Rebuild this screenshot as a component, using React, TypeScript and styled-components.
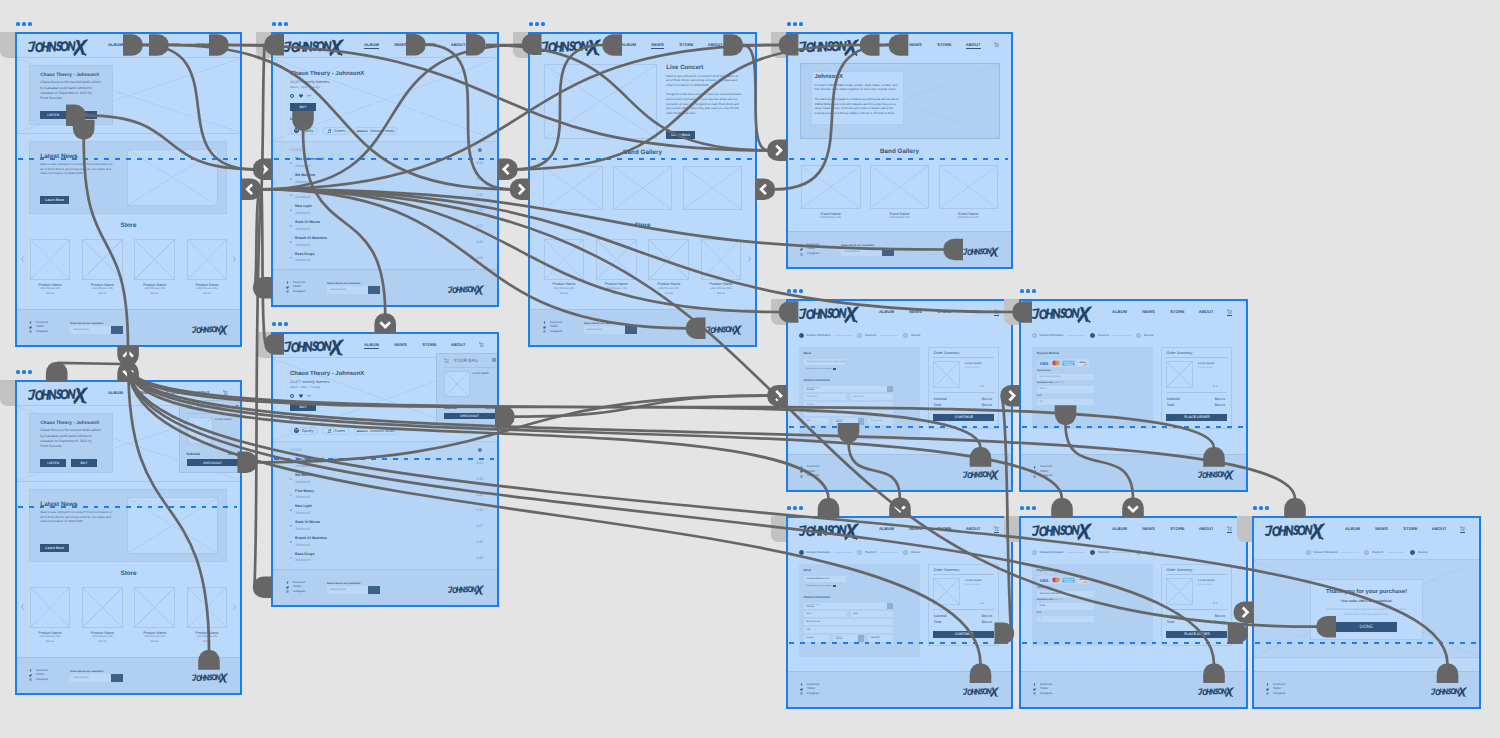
import { ReactNode } from "react";
import styled, { createGlobalStyle, css } from "styled-components";
import {
  FaClock,
  FaFacebookF,
  FaHeart,
  FaInstagram,
  FaItunesNote,
  FaSpotify,
  FaTimesCircle,
  FaTwitter,
} from "react-icons/fa";
import { ShoppingCart } from "lucide-react";

const ink = "#33567a";
const soft = "#7292b5";
const rule = "#a6c4e6";
const panel = "#b1cff0";
const paper = "#bbd9fa";
const blue = "#1a7ef0";
const wire = "#666666";

type Point = [number, number];
type Side = "left" | "right" | "up" | "down";

/* ---------- boards ---------- */

export default function App() {
  return (
    <>
      <GlobalStyle />
      <Canvas>
        <Board x={15} y={32} w={227} h={315}>
          <HomePage />
        </Board>
        <Board x={15} y={380} w={227} h={315}>
          <HomePage bag />
        </Board>
        <Board x={271} y={32} w={228} h={275}>
          <AlbumPage />
        </Board>
        <Board x={271} y={332} w={228} h={275}>
          <AlbumPage bag />
        </Board>
        <Board x={528} y={32} w={229} h={315}>
          <NewsPage />
        </Board>
        <Board x={786} y={32} w={227} h={237}>
          <AboutPage />
        </Board>
        <Board x={786} y={299} w={227} h={192.5} dashTop={127}>
          <ContactPage />
        </Board>
        <Board x={1019} y={299} w={229} h={192.5} dashTop={127}>
          <PaymentPage />
        </Board>
        <Board x={786} y={516} w={227} h={193}>
          <ContactPage filled />
        </Board>
        <Board x={1019} y={516} w={229} h={193}>
          <PaymentPage filled />
        </Board>
        <Board x={1252} y={516} w={229} h={193}>
          <DonePage />
        </Board>
        <Wires />
      </Canvas>
    </>
  );
}

interface BoardProps {
  x: number;
  y: number;
  w: number;
  h: number;
  dashTop?: number;
  children: ReactNode;
}

function Board({ x, y, w, h, dashTop = 126, children }: BoardProps) {
  return (
    <>
      <BoardFrame $x={x} $y={y} $w={w} $h={h}>
        {children}
        <FoldLine $top={dashTop} />
        <BoardOutline />
      </BoardFrame>
      <BoardHandle $x={x - 15.5} $y={y} />
      <BoardDots $x={x + 1.4} $y={y - 9.6}>
        <i />
        <i />
        <i />
      </BoardDots>
    </>
  );
}

/* ---------- shared page parts ---------- */

function Logo({ small }: { small?: boolean }) {
  return (
    <LogoSvg viewBox="0 0 60 17" $small={small}>
      <g
        fontFamily="Lato, 'Liberation Sans', sans-serif"
        fontWeight="900"
        fontStyle="italic"
        fill="#1f4266"
        stroke="#1f4266"
        strokeWidth=".45"
      >
        <text
          x="1.6 8.2 15.4 23.8 32.2 37.6 45.6"
          y="12.4 12.6 12 12.5 11.6 12 11.6"
          rotate="10 0 4 -2 5 0 3"
          fontSize="13"
          transform="scale(.86 1)"
        >
          JOHNSON
        </text>
        <text x="0" y="0" fontSize="19.5" transform="translate(46 15) rotate(4) scale(.9 1)">
          X
        </text>
      </g>
      <path
        d="M.6 4.1 7.6 3M0 11.2l2.6 1.2M57 2.2l2.6-1.6M47.6 14.8l-1.4 2M56.4 14.6l1.8 1.8"
        fill="none"
        stroke="#1f4266"
        strokeWidth="1.5"
      />
    </LogoSvg>
  );
}

const links = ["ALBUM", "NEWS", "STORE", "ABOUT"];

function SiteHeader({ active, lined }: { active?: string; lined?: boolean }) {
  return (
    <Header $lined={lined}>
      <Logo />
      <Nav>
        {links.map((link) => (
          <NavLink key={link} $active={link === active}>
            {link}
          </NavLink>
        ))}
        <NavLink $active={active === "CART"}>
          <ShoppingCart size={4.8} strokeWidth={1.8} />
        </NavLink>
      </Nav>
    </Header>
  );
}

function SiteFooter({ newsletter = true, inset = 14 }: { newsletter?: boolean; inset?: number }) {
  return (
    <Footer $inset={inset}>
      <Socials>
        <li>
          <FaFacebookF /> Facebook
        </li>
        <li>
          <FaTwitter /> Twitter
        </li>
        <li>
          <FaInstagram /> Instagram
        </li>
      </Socials>
      {newsletter && (
        <Newsletter>
          <strong>Subscribe to our newsletter</strong>
          <div>
            <span>Email Address</span>
            <b>→</b>
          </div>
        </Newsletter>
      )}
      <Logo small />
    </Footer>
  );
}

function Products() {
  return (
    <>
      <SectionTitle $height={23}>Store</SectionTitle>
      <ProductRow>
        <Arrow viewBox="0 0 3 6">
          <path d="M2.5 .5 .6 3l1.9 2.5" />
        </Arrow>
        <ProductGrid>
          {[0, 1, 2, 3].map((n) => (
            <Item key={n}>
              <Crossed $w={40.5} $h={41} />
              <b>Product Name</b>
              <span>click Choose info</span>
              <em>$xx.xx</em>
            </Item>
          ))}
        </ProductGrid>
        <Arrow viewBox="0 0 3 6">
          <path d="M.5 .5 2.4 3 .5 5.5" />
        </Arrow>
      </ProductRow>
    </>
  );
}

function Bag({ top }: { top: number }) {
  return (
    <BagPanel $top={top}>
      <BagTitle>
        <ShoppingCart size={5} strokeWidth={1.6} />
        <span>YOUR BAG</span>
        <FaTimesCircle size={4} />
      </BagTitle>
      <BagItem>
        <Crossed $w={26.5} $h={26.5} />
        <span>Lorem ipsum</span>
      </BagItem>
      <BagTotal>
        <span>Subtotal</span>
        <span>$xx.xx</span>
      </BagTotal>
      <Button $w={52} $h={6.5} $size={3.4}>
        CHECKOUT
      </Button>
    </BagPanel>
  );
}

function Lines({ lines, leading, size = 3 }: { lines: string[]; leading: number; size?: number }) {
  return (
    <Paragraph $leading={leading} $size={size}>
      {lines.map((line, i) => (
        <p key={i}>{line}</p>
      ))}
    </Paragraph>
  );
}

/* ---------- pages ---------- */

function HomePage({ bag }: { bag?: boolean }) {
  return (
    <Page>
      <SiteHeader lined />
      <Hero $h={76}>
        <HeroCard>
          <Heading $size={4.75}>Chaos Theory - JohnsonX</Heading>
          <Lines
            leading={5.4}
            size={3.35}
            lines={[
              "Chaos theory is the second studio album",
              "by Canadian punk band JohnsonX,",
              "released on September 6, 2022 by",
              "Punk Records.",
            ]}
          />
          <ButtonRow>
            <Button $w={26} $h={8} $size={3.4}>
              LISTEN
            </Button>
            <Button $w={26} $h={8} $size={3.4}>
              BUY
            </Button>
          </ButtonRow>
        </HeroCard>
      </Hero>
      <NewsCard>
        <div>
          <Heading $size={6.4}>Latest News</Heading>
          <Lines
            leading={4.7}
            lines={[
              "Want to see JohnsonX in concert? Find information on",
              "all of Punk Rock's upcoming concerts, tour dates and",
              "ticket information for 2022-2023.",
            ]}
          />
          <Button $w={29} $h={8} $size={3.5}>
            Learn More
          </Button>
        </div>
        <Crossed $w={91} $h={57} />
      </NewsCard>
      <Products />
      <SiteFooter />
      {bag && <Bag top={19.5} />}
    </Page>
  );
}

const tracks = [
  ["This Is JohnsonX", "4:08"],
  ["We Machine", "3:29"],
  ["Fine Misery", "4:28"],
  ["New Light", "5:34"],
  ["State Of Moves", "4:37"],
  ["Breath Of Madness", "5:45"],
  ["Bass Drugs", "4:38"],
];

function AlbumPage({ bag }: { bag?: boolean }) {
  return (
    <Page>
      <SiteHeader active="ALBUM" lined />
      <Hero $h={84}>
        <AlbumInfo>
          <Heading $size={6}>Chaos Theory - JohnsonX</Heading>
          <strong>21,377 monthly listeners</strong>
          <small>Album - 2022 - 7 songs</small>
          <AlbumIcons>
            <FaTimesCircle size={4} />
            <FaHeart size={4} />
            <span>•••</span>
          </AlbumIcons>
          <Button $w={26} $h={8} $size={3.4}>
            BUY
          </Button>
          <ListenOn>Listen On</ListenOn>
          <Pills>
            <Pill $w={27.5}>
              <FaSpotify size={5} /> Spotify
            </Pill>
            <Pill $w={27.5}>
              <FaItunesNote size={4.5} /> iTunes
            </Pill>
            <Pill $w={43.5}>
              <b>amazon</b> Amazon music
            </Pill>
          </Pills>
        </AlbumInfo>
      </Hero>
      <TrackList>
        <TrackHead>
          <span># TITLE</span>
          <FaClock size={4} />
        </TrackHead>
        {tracks.map(([title, time], i) => (
          <Track key={title}>
            <span>{i + 1}</span>
            <div>
              <b>{title}</b>
              <em>JohnsonX</em>
            </div>
            <time>{time}</time>
          </Track>
        ))}
      </TrackList>
      <SiteFooter inset={15} />
      {bag && <Bag top={21} />}
    </Page>
  );
}

function NewsPage() {
  return (
    <Page>
      <SiteHeader active="NEWS" />
      <ConcertRow>
        <Crossed $w={113} $h={75} />
        <div>
          <Heading $size={6.1}>Live Concert</Heading>
          <Lines
            leading={4.65}
            lines={[
              "Want to see JohnsonX in concert? Find information on",
              "all of Punk Rock's upcoming concerts, tour dates and",
              "ticket information for 2022-2023.",
              "",
              "Songkick is the first to know of new tour announcements",
              "and concert information. If your favorite artists are not",
              "currently on tour, join Songkick to track Punk Rock and",
              "get concert alerts when they play near you, like 37,060",
              "other Punk Rock fans.",
            ]}
          />
          <Button $w={29} $h={8} $size={3.5}>
            Learn More
          </Button>
        </div>
      </ConcertRow>
      <SectionTitle $height={27}>Band Gallery</SectionTitle>
      <GalleryRow $h={48}>
        <Crossed $w={59.5} $h={44} />
        <Crossed $w={59.5} $h={44} />
        <Crossed $w={59.5} $h={44} />
      </GalleryRow>
      <Products />
      <SiteFooter inset={15} />
    </Page>
  );
}

function AboutPage() {
  return (
    <Page>
      <SiteHeader active="ABOUT" />
      <AboutHero>
        <AboutCard>
          <Heading $size={5.9}>JohnsonX</Heading>
          <Lines
            leading={4.75}
            size={2.97}
            lines={[
              "Formed in 2005, Matt (vocals, guitar), Ryan (bass, vocals), and",
              "Fitz (drums), were drawn together for their love of great music.",
              "",
              "The band quickly began to combine everything we all love about",
              "1990s/2000s punk rock with classics and hit songs like you've",
              "never heard before. From the epic notes of Meat Loaf to the",
              "soaring power of a Disney ballad, nothing is off limits to them.",
            ]}
          />
        </AboutCard>
      </AboutHero>
      <SectionTitle $height={26}>Band Gallery</SectionTitle>
      <GalleryRow $h={66.5}>
        {[0, 1, 2].map((n) => (
          <Item key={n}>
            <Crossed $w={59.5} $h={44} />
            <b>Event Name</b>
            <span>click Choose info</span>
          </Item>
        ))}
      </GalleryRow>
      <SiteFooter />
    </Page>
  );
}

function Stepper({ step, centered }: { step: number; centered?: boolean }) {
  return (
    <Steps $centered={centered}>
      {["Contact Information", "Payment", "Review"].map((label, i) => (
        <Step key={label} $on={i === step} $wide={i === 0}>
          <i />
          <span>{label}</span>
          {i < 2 && <u />}
        </Step>
      ))}
    </Steps>
  );
}

function OrderSummary({ action }: { action: string }) {
  return (
    <Summary>
      <h4>Order Summary</h4>
      <SummaryItem>
        <Crossed $w={27} $h={27} />
        <div>
          <b>Lorem ipsum</b>
          <span>Lorem ipsum</span>
          <em>- 1 +</em>
        </div>
      </SummaryItem>
      <SummaryLine>
        <span>Subtotal</span>
        <span>$xx.xx</span>
      </SummaryLine>
      <SummaryLine>
        <span>Total</span>
        <span>$xx.xx</span>
      </SummaryLine>
      <Button $w={61} $h={6.5} $size={3.5}>
        {action}
      </Button>
    </Summary>
  );
}

function ContactPage({ filled }: { filled?: boolean }) {
  const text = (empty: string, full: string) => (filled ? full : empty);
  return (
    <Page>
      <SiteHeader active="CART" />
      <Stepper step={0} />
      <CheckoutRow>
        <FormPanel $h={92.5}>
          <Label>Email</Label>
          <Field $w={42.5} $dark={filled}>
            {text("Type Email to receive your digital receipt", "shoppee68@gmail.com")}
          </Field>
          <Hint>
            Subscribe to our newsletter <i />
          </Hint>
          <Label>Contact Information</Label>
          <Field $w={89.5} $dark $select>
            <small>Country/Region</small>
            Canada
          </Field>
          <FieldRow>
            <Field $w={42.5} $dark={filled}>{text("First name", "John")}</Field>
            <Field $w={42.5} $dark={filled}>{text("Last name", "Doe")}</Field>
          </FieldRow>
          <Field $w={89.5} $dark={filled}>{text("Address", "99 Infinite Ave")}</Field>
          <Field $w={89.5} $dark={filled}>{text("Apartment", "#23")}</Field>
          <FieldRow>
            <Field $w={25} $dark={filled}>{text("City", "London")}</Field>
            <Field $w={31} $dark $select>
              <small>Province</small>
              Ontario
            </Field>
            <Field $w={25} $dark={filled}>{text("Postal code", "N6A 5P2")}</Field>
          </FieldRow>
        </FormPanel>
        <OrderSummary action="CONTINUE" />
      </CheckoutRow>
      <SiteFooter newsletter={false} />
    </Page>
  );
}

function PaymentPage({ filled }: { filled?: boolean }) {
  return (
    <Page>
      <SiteHeader active="CART" />
      <Stepper step={1} />
      <CheckoutRow>
        <FormPanel $h={81.5}>
          <Label>Payment Method</Label>
          <Cards viewBox="0 0 52 8">
            <rect x="0" y="0" width="52" height="8" fill="#b9d6f6" />
            <text x="2.6" y="5.6" textLength="9" fill="#1760b8" fontSize="4.2" fontStyle="italic">
              VISA
            </text>
            <circle cx="17.6" cy="4" r="2.4" fill="#d7453f" />
            <circle cx="20.4" cy="4" r="2.4" fill="#e08d3c" fillOpacity=".9" />
            <rect x="25.5" y="1.8" width="12" height="4.6" fill="#4ba5dd" />
            <text x="26" y="3.9" textLength="11" fill="#e4f1fd" fontSize="2.1">
              AMERICAN
            </text>
            <text x="27" y="6" textLength="9" fill="#e4f1fd" fontSize="2.1">
              EXPRESS
            </text>
            <rect x="41.5" y="1.7" width="8" height="4.8" fill="#cfe1f2" />
            <text x="42" y="4" textLength="7" fill="#4c6480" fontSize="2">
              DISCOVER
            </text>
            <path d="M44 6.5q4-.4 5.5-2v2z" fill="#e39055" />
          </Cards>
          <FieldLabel>Card number</FieldLabel>
          <Field $w={57} $dark={filled}>{filled ? "4519 0000 1234 5678" : "0000 0000 0000 0000"}</Field>
          <FieldLabel>
            Expiration date <em>(MM/YY)</em>
          </FieldLabel>
          <Field $w={57} $dark={filled}>{filled ? "12/26" : "MM/YY"}</Field>
          <FieldLabel>CVV</FieldLabel>
          <Field $w={57} $dark={filled}>{filled ? "**" : "000"}</Field>
        </FormPanel>
        <OrderSummary action="PLACE ORDER" />
      </CheckoutRow>
      <SiteFooter newsletter={false} />
    </Page>
  );
}

function DonePage() {
  return (
    <Page>
      <SiteHeader active="CART" />
      <Stepper step={2} centered />
      <ThanksHero>
        <ThanksCard>
          <Heading $size={5.75}>Thank you for your purchase!</Heading>
          <strong>Your order #8975 was submitted.</strong>
          <small>You will receive an e-mail receipt from our customer service team.</small>
          <small>Please also check your spam email.</small>
          <Button $w={61} $h={9.5} $size={4.8}>
            DONE
          </Button>
        </ThanksCard>
      </ThanksHero>
      <SiteFooter newsletter={false} />
    </Page>
  );
}

/* ---------- prototype wires ---------- */

// s-curve leaving and entering along the x axis
function across([x1, y1]: Point, [x2, y2]: Point) {
  const dx = x2 - x1;
  const length = Math.hypot(dx, y2 - y1);
  const d = Math.min(length * (length > 400 ? 0.54 : 0.58), Math.abs(dx));
  return `M${x1} ${y1}C${x1 + d} ${y1} ${x2 - d} ${y2} ${x2} ${y2}`;
}

// s-curve leaving and entering along the y axis, flatter on long spans
function downward([x1, y1]: Point, [x2, y2]: Point) {
  const dy = y2 - y1;
  const d = Math.min(Math.hypot(x2 - x1, dy) * 0.6, dy, 45 + dy * 0.44);
  return `M${x1} ${y1}C${x1} ${y1 + d} ${x2} ${y2 - d} ${x2} ${y2}`;
}

const albumHub: Point = [260, 189.3];
const homeHub: Point = [128.3, 366];

const paths = [
  across([142, 45], [254, 169.3]),
  across([168, 45], [511, 189.3]),
  across([228, 45], [768, 150.3]),
  across([85, 115.3], [254, 169.3]),
  across([425, 44.7], [511, 189.3]),
  across([486, 45], [768, 150.3]),
  across([517, 169.3], [603, 45]),
  across([517, 169.3], [861, 45]),
  across([743, 45], [768, 150.3]),
  across([775, 189.3], [889, 45]),
  across([257, 462.3], [768, 395.7]),
  across([514, 416.7], [768, 395.7]),
  ...(
    [
      [522, 45],
      [779, 45],
      [944, 249.5],
      [1013, 312],
      [779, 312],
      [687, 328.3],
      [1317, 626.7],
    ] as Point[]
  ).map((end) => across(albumHub, end)),
  ...(
    [
      [209, 651],
      [980.5, 448],
      [1214, 448],
      [828.5, 499],
      [1062, 499],
      [1295, 499],
      [980.5, 664],
      [1214, 664],
      [1447.5, 664],
    ] as Point[]
  ).map((end) => downward(homeHub, end)),
  downward([83.7, 139], [128, 348]),
  downward([303, 130], [385.2, 314]),
  downward([848.5, 442], [900, 499]),
  downward([1065.5, 424], [1133, 499]),
  "M57 362.8 122 364",
  "M142 45H266M486 45H523M743 45H780M878 45H890",
  "M264.5 45C262.5 80 263.5 150 261.5 189.3",
  "M261.5 189.3C263.5 240 261 330 265.5 344",
  "M259 189.3C255 215 257.5 260 255 288",
  "M261 189.3C254 320 258.5 480 254.5 587",
  "M1002 396C1009 440 1006 560 1011 630",
];

const plugs: [Side, number, number][] = [
  ["right", 123, 45], ["right", 149, 45], ["right", 209, 45], ["right", 66, 115.3],
  ["down", 83.7, 119.8], ["left", 284, 44.7], ["right", 406, 44.7], ["right", 466, 44.7],
  ["down", 303, 111], ["left", 272.5, 287.7], ["left", 284, 344], ["left", 272.5, 587.3],
  ["right", 495, 416.7], ["right", 237.5, 462.3], ["left", 541.5, 44.3], ["left", 622, 45],
  ["right", 723.3, 45], ["left", 705.5, 328.3], ["left", 798.4, 44.7], ["left", 879.5, 45],
  ["left", 908.3, 45], ["left", 963, 249.5], ["left", 798.4, 312], ["left", 1032, 312],
  ["down", 848.5, 423], ["down", 1065.5, 405.3], ["up", 980.5, 466.7], ["up", 1214, 466.7],
  ["up", 828.5, 517.7], ["up", 1062, 517.7], ["up", 1295, 517.7], ["up", 980.5, 683],
  ["up", 1214, 683], ["up", 1447.5, 683], ["right", 994.5, 633.3], ["right", 1227.7, 633.3],
  ["left", 1336, 626.7], ["up", 209, 669.7], ["up", 56.7, 381.7],
];

// same plugs, with the chevron of an incoming connection
const entries: [Side, number, number, number][] = [
  ["left", 272.5, 169.3, 0], ["right", 241.5, 189.3, 180], ["up", 385.2, 332.8, 90],
  ["right", 498, 169.3, 180], ["left", 529.5, 189.3, 0], ["right", 755.3, 189.3, 180],
  ["left", 786.8, 150.3, 0], ["left", 786.8, 395.7, 0], ["left", 1020, 395.7, 0],
  ["up", 900, 517, 90], ["up", 1133, 517, 90], ["left", 1253.3, 612.3, 0],
  ["down", 128.1, 346, -90], ["up", 128.1, 381.5, 90],
];

const turns: Record<Side, number> = { right: 0, down: 90, left: 180, up: 270 };

function Plug({ side, x, y }: { side: Side; x: number; y: number }) {
  return (
    <path
      d="M0-10.8H8.8A10.8 10.2 0 0 1 19.6-.6V.6A10.8 10.2 0 0 1 8.8 10.8H0Z"
      transform={`translate(${x} ${y}) rotate(${turns[side]})`}
      fill={wire}
    />
  );
}

function Chevron({ side, x, y, turn }: { side: Side; x: number; y: number; turn: number }) {
  const reach = 8.4;
  const cx = x + (side === "right" ? reach : side === "left" ? -reach : 0);
  const cy = y + (side === "down" ? reach : side === "up" ? -reach : 0);
  return <path d="M-2.2-4.8 2.6 0-2.2 4.8" transform={`translate(${cx} ${cy}) rotate(${turn})`} stroke="#fff" />;
}

function Wires() {
  return (
    <WireLayer viewBox="0 0 1500 738">
      {plugs.map(([side, x, y]) => (
        <Plug key={`${x}-${y}`} side={side} x={x} y={y} />
      ))}
      {entries.map(([side, x, y, turn]) => (
        <g key={`${x}-${y}`}>
          <Plug side={side} x={x} y={y} />
          <Chevron side={side} x={x} y={y} turn={turn} />
        </g>
      ))}
      {paths.map((d) => (
        <path key={d} d={d} stroke={wire} />
      ))}
      <path d="M128.1 346V368" stroke={wire} />
    </WireLayer>
  );
}

/* ---------- styles ---------- */

const GlobalStyle = createGlobalStyle`
  * {
    box-sizing: border-box;
    margin: 0;
    padding: 0;
  }

  body {
    background: #e4e4e4;
    font-family: "Liberation Sans", Arial, sans-serif;
    text-rendering: geometricPrecision;
    overflow: hidden;
  }

  i, em {
    font-style: normal;
  }
`;

const crossed = css`
  background-image:
    linear-gradient(to top right, transparent calc(50% - 0.5px), ${rule} 50%, transparent calc(50% + 0.5px)),
    linear-gradient(to bottom right, transparent calc(50% - 0.5px), ${rule} 50%, transparent calc(50% + 0.5px));
`;

const Canvas = styled.main`
  position: relative;
  width: 1500px;
  height: 738px;
  overflow: hidden;
`;

const BoardFrame = styled.section<{ $x: number; $y: number; $w: number; $h: number }>`
  position: absolute;
  left: ${({ $x }) => $x}px;
  top: ${({ $y }) => $y}px;
  width: ${({ $w }) => $w}px;
  height: ${({ $h }) => $h}px;
  background: ${paper};
  color: ${ink};
  white-space: nowrap;
`;

const BoardOutline = styled.div`
  position: absolute;
  inset: -0.4px;
  border: 2px solid ${blue};
`;

const FoldLine = styled.div<{ $top: number }>`
  position: absolute;
  top: ${({ $top }) => $top}px;
  left: 3px;
  right: 5px;
  height: 2px;
  background: repeating-linear-gradient(90deg, ${blue} 0 4.7px, transparent 4.7px 10.8px);
`;

const BoardHandle = styled.div<{ $x: number; $y: number }>`
  position: absolute;
  left: ${({ $x }) => $x}px;
  top: ${({ $y }) => $y}px;
  width: 15.5px;
  height: 26px;
  border-bottom-left-radius: 7px;
  background: #c2c2c2;
`;

const BoardDots = styled.div<{ $x: number; $y: number }>`
  position: absolute;
  left: ${({ $x }) => $x}px;
  top: ${({ $y }) => $y}px;
  display: flex;
  gap: 2.3px;

  i {
    width: 3.7px;
    height: 3.7px;
    border-radius: 50%;
    background: ${blue};
  }
`;

const Page = styled.div`
  position: relative;
  display: flex;
  flex-direction: column;
  width: 100%;
  height: 100%;
`;

const LogoSvg = styled.svg<{ $small?: boolean }>`
  width: ${({ $small }) => ($small ? 36 : 60)}px;
  height: ${({ $small }) => ($small ? 10.2 : 17)}px;
  overflow: visible;
  flex: none;
`;

const Header = styled.header<{ $lined?: boolean }>`
  display: flex;
  height: 26px;
  padding: 0 0 0 12.5px;
  flex: none;
  border-bottom: 1px solid ${({ $lined }) => ($lined ? "#aac8ea" : "transparent")};

  ${LogoSvg} {
    margin-top: 6.6px;
  }
`;

const Nav = styled.nav`
  display: grid;
  grid-template-columns: repeat(4, 28.9px) 18px;
  margin-left: 13.6px;
  height: 26px;
  align-items: center;
  justify-items: center;
`;

const NavLink = styled.a<{ $active?: boolean }>`
  display: flex;
  align-items: center;
  height: 8px;
  border-bottom: 1px solid ${({ $active }) => ($active ? ink : "transparent")};
  font-size: 4.2px;
  font-weight: 700;
`;

const Hero = styled.div<{ $h: number }>`
  height: ${({ $h }) => $h}px;
  flex: none;
  border-bottom: 1px solid #a8c6e8;
  ${crossed}
`;

const Crossed = styled.div<{ $w: number; $h: number }>`
  width: ${({ $w }) => $w}px;
  height: ${({ $h }) => $h}px;
  flex: none;
  border: 1px solid #a9c7e8;
  background-color: ${paper};
  ${crossed}
`;

const Heading = styled.h2<{ $size: number }>`
  font-size: ${({ $size }) => $size}px;
  line-height: 8px;
  font-weight: 700;
`;

const Paragraph = styled.div<{ $leading: number; $size: number }>`
  font-size: ${({ $size }) => $size}px;
  line-height: ${({ $leading }) => $leading}px;
  color: #416388;

  p {
    height: ${({ $leading }) => $leading}px;
  }
`;

const Button = styled.div<{ $w: number; $h: number; $size: number }>`
  display: flex;
  align-items: center;
  justify-content: center;
  flex: none;
  width: ${({ $w }) => $w}px;
  height: ${({ $h }) => $h}px;
  background: #32557b;
  color: #c3def9;
  font-size: ${({ $size }) => $size}px;
  font-weight: 700;
`;

const ButtonRow = styled.div`
  display: flex;
  gap: 4.7px;
  margin-top: 9.2px;
`;

const HeroCard = styled.div`
  width: 83.5px;
  height: 60px;
  margin: 7.3px 0 0 14.3px;
  padding: 5.6px 0 0 10px;
  border: 1px solid #a9c7e8;
  background: ${panel};

  ${Heading} {
    margin-bottom: 0.4px;
  }
`;

const NewsCard = styled.div`
  display: flex;
  flex: none;
  justify-content: space-between;
  width: 197.5px;
  height: 72.7px;
  margin: 7.2px 0 0 14.3px;
  padding: 7px 8px 0 10px;
  border: 1px solid #a9c7e8;
  background: ${panel};

  ${Heading} {
    margin: 4.1px 0 0.8px;
  }

  ${Button} {
    margin-top: 19.7px;
  }
`;

const SectionTitle = styled.h3<{ $height: number }>`
  display: flex;
  flex: none;
  align-items: center;
  justify-content: center;
  height: ${({ $height }) => $height}px;
  font-size: 6.3px;
`;

const ProductRow = styled.div`
  display: flex;
  flex: none;
  padding: 2px 6px 0;
  justify-content: space-between;
`;

const Arrow = styled.svg`
  width: 3px;
  height: 6px;
  margin-top: 17px;
  fill: none;
  stroke: ${soft};
  stroke-width: 0.6;
`;

const ProductGrid = styled.div`
  display: flex;
  width: 197.5px;
  justify-content: space-between;
`;

const Item = styled.div`
  display: flex;
  flex-direction: column;
  align-items: center;
  line-height: 4.7px;

  b {
    margin-top: 2.8px;
    font-size: 3.6px;
    font-weight: 400;
  }

  span,
  em {
    font-size: 2.75px;
    color: #587a9f;
  }
`;

const Footer = styled.footer<{ $inset: number }>`
  display: flex;
  flex: none;
  width: 100%;
  height: 38px;
  margin-top: auto;
  padding: 10.5px ${({ $inset }) => $inset}px 0;
  border-top: 1px solid #a4c1e1;
  background: ${panel};

  > ${LogoSvg} {
    margin: 4.5px 0 0 auto;
  }
`;

const Socials = styled.ul`
  width: 41px;
  list-style: none;
  font-size: 2.75px;
  line-height: 4.6px;

  li {
    display: flex;
    align-items: center;
    gap: 4px;
    height: 4.6px;
  }

  svg {
    width: 3px;
    height: 3px;
    flex: none;
  }
`;

const Newsletter = styled.div`
  strong {
    display: block;
    font-size: 2.55px;
    line-height: 5px;
    font-weight: 600;
  }

  div {
    display: flex;
    width: 53px;
    height: 8px;
    line-height: 8px;
    background: #bbd8f7;
    font-size: 2.4px;
    color: ${soft};
  }

  span {
    flex: 1;
    padding-left: 3.5px;
  }

  b {
    width: 12px;
    background: #3d6187;
    color: #b9d5f4;
    font-size: 3px;
    text-align: center;
  }
`;

// slides over the right side of the page below the header
const BagPanel = styled.aside<{ $top: number }>`
  position: absolute;
  top: ${({ $top }) => $top}px;
  right: 0;
  width: 63px;
  height: 73.5px;
  padding: 0 0 0 6.5px;
  border: 1px solid #a2c0e2;
  background: ${panel};
`;

const BagTitle = styled.div`
  display: flex;
  align-items: center;
  gap: 5px;
  width: 52px;
  height: 13.5px;
  border-bottom: 1px solid #a4c1e1;
  font-size: 4.7px;
  color: #4d6f94;

  svg:last-child {
    margin-left: auto;
  }
`;

const BagItem = styled.div`
  display: flex;
  gap: 2px;
  margin-top: 3.3px;
  font-size: 2.9px;
  line-height: 5px;
`;

const BagTotal = styled.div`
  display: flex;
  justify-content: space-between;
  width: 52px;
  margin-top: 8.5px;
  font-size: 3.4px;
  line-height: 5px;
  font-weight: 600;
  margin-bottom: 2px;
`;

const AlbumInfo = styled.div`
  display: flex;
  flex-direction: column;
  padding: 11.6px 0 0 19px;

  strong {
    margin-top: 1.2px;
    font-size: 3.65px;
    line-height: 6px;
    font-weight: 500;
  }

  small {
    font-size: 2.9px;
    line-height: 4.5px;
    color: #587a9f;
  }
`;

const AlbumIcons = styled.div`
  display: flex;
  align-items: center;
  gap: 4.5px;
  height: 8px;
  margin: 2.5px 0 3.4px;
  font-size: 3.5px;
`;

const ListenOn = styled.h4`
  margin-top: 4px;
  font-size: 4.4px;
  line-height: 7px;
`;

const Pills = styled.div`
  display: flex;
  gap: 4.5px;
  margin-top: 5px;
`;

const Pill = styled.div<{ $w: number }>`
  display: flex;
  align-items: center;
  justify-content: center;
  gap: 2.5px;
  width: ${({ $w }) => $w}px;
  height: 7.5px;
  border: 1px solid #adcbed;
  border-radius: 4px;
  font-size: 3.8px;

  b {
    font-size: 2.9px;
    color: #1f4266;
  }

  svg {
    color: #1f4266;
  }
`;

const TrackList = styled.div`
  flex: 1;
  padding: 3.8px 16px 0 19px;
  background: #b6d4f5;
`;

const TrackHead = styled.div`
  display: flex;
  align-items: center;
  justify-content: space-between;
  height: 9px;
  padding-right: 1.5px;
  font-size: 3.2px;
  color: ${soft};

  svg {
    color: #4d6f94;
  }
`;

const Track = styled.div`
  display: grid;
  grid-template-columns: 5px 1fr auto;
  height: 15.75px;
  padding-top: 1.4px;
  line-height: 6.6px;

  > span {
    padding-top: 4px;
    font-size: 2.9px;
    line-height: 6px;
  }

  b,
  em {
    display: block;
    font-size: 3.5px;
  }

  b {
    font-weight: 600;
  }

  em,
  time {
    color: ${soft};
  }

  time {
    padding-top: 4px;
    font-size: 3.5px;
  }
`;

const ConcertRow = styled.div`
  display: flex;
  flex: none;
  gap: 9.8px;
  height: 80.5px;
  padding: 5.5px 0 0 15.5px;

  ${Heading} {
    margin-bottom: 2.3px;
  }

  ${Button} {
    margin-top: 15.5px;
  }
`;

const GalleryRow = styled.div<{ $h: number }>`
  display: flex;
  flex: none;
  justify-content: space-between;
  height: ${({ $h }) => $h}px;
  margin: 0 15px;
`;

const AboutHero = styled.div`
  flex: none;
  width: 200px;
  height: 75.5px;
  margin: 5.3px 0 0 14px;
  padding: 6.3px 9.5px;
  border: 1px solid #9cbadb;
  background-color: ${panel};
  ${crossed}
`;

const AboutCard = styled.div`
  width: 93px;
  height: 54px;
  padding: 1px 3px;
  border: 1px solid #aecbec;
  background: ${paper};

  ${Heading} {
    margin-bottom: 2px;
  }
`;

const Steps = styled.div<{ $centered?: boolean }>`
  display: flex;
  flex: none;
  height: 17px;
  padding: 4px 0 0 ${({ $centered }) => ($centered ? 53.5 : 12.5)}px;
  margin-bottom: ${({ $centered }) => ($centered ? 0 : 5.3)}px;
`;

const Step = styled.div<{ $on: boolean; $wide: boolean }>`
  display: flex;
  align-items: center;
  width: ${({ $wide }) => ($wide ? 58.7 : 46)}px;
  height: 12px;
  font-size: 2.75px;

  i {
    width: 5px;
    height: 5px;
    margin-right: 3px;
    border: 1px solid ${({ $on }) => ($on ? ink : "#90b0d4")};
    border-radius: 50%;
    background: ${({ $on }) => ($on ? ink : "#a6c5e8")};
  }

  u {
    width: 18px;
    height: 0;
    margin-left: auto;
    margin-right: 5px;
    border-top: 1px solid #abc9eb;
  }
`;

const CheckoutRow = styled.div`
  display: flex;
  flex: none;
  gap: 8.2px;
  align-items: flex-start;
  padding-left: 12.7px;
`;

const FormPanel = styled.div<{ $h: number }>`
  width: 121.6px;
  height: ${({ $h }) => $h}px;
  padding: 3.5px 5px;
  background: ${panel};
`;

const Label = styled.div`
  font-size: 2.75px;
  font-weight: 700;
  line-height: 6px;
  margin-bottom: 1.8px;
`;

const FieldLabel = styled.div`
  height: 6.3px;
  font-size: 2.3px;
  line-height: 6.3px;
  font-weight: 600;

  em {
    color: ${soft};
    font-weight: 400;
  }
`;

const Field = styled.div<{ $w: number; $dark?: boolean; $select?: boolean }>`
  display: flex;
  flex-direction: column;
  justify-content: center;
  width: ${({ $w }) => $w}px;
  height: 6.3px;
  margin-bottom: 1.8px;
  padding-left: 2.7px;
  border-right: ${({ $select }) => ($select ? "6px solid #8eaed2" : "0")};
  background: #bdd9f8;
  font-size: 2.2px;
  line-height: 2.3px;
  color: ${({ $dark }) => ($dark ? ink : soft)};

  small {
    font-size: 1.9px;
    color: ${soft};
  }

  ${FieldLabel} + & {
    margin-bottom: 0;
  }
`;

const FieldRow = styled.div`
  display: flex;
  justify-content: space-between;
  width: 89.5px;
`;

const Hint = styled.div`
  display: flex;
  align-items: center;
  gap: 2px;
  height: 4px;
  margin-bottom: 7.4px;
  padding-left: 2.5px;
  font-size: 2.1px;
  color: #587a9f;

  i {
    width: 2.2px;
    height: 2.2px;
    background: ${ink};
  }
`;

const Cards = styled.svg`
  display: block;
  width: 52px;
  height: 8px;
  margin-bottom: 1px;
  font-weight: 700;
`;

const Summary = styled.div`
  width: 70.5px;
  height: 82px;
  padding: 1px 4px;
  border: 1px solid #a9c7e8;

  h4 {
    height: 8.3px;
    border-bottom: 1px solid #a4c1e1;
    font-size: 3.65px;
    line-height: 8px;
    font-weight: 500;
  }
`;

const SummaryItem = styled.div`
  display: flex;
  gap: 4.5px;
  height: 35px;
  padding-top: 3.5px;
  margin-bottom: 3px;
  border-bottom: 1px solid #a4c1e1;
  font-size: 2.9px;

  div:last-child {
    display: flex;
    flex-direction: column;
    line-height: 4.7px;
  }

  b {
    font-weight: 500;
  }

  span {
    font-size: 2.5px;
    color: #8aa9cc;
  }

  em {
    margin: 13px 0 0 13.5px;
  }
`;

const SummaryLine = styled.div`
  display: flex;
  justify-content: space-between;
  padding-right: 2px;
  height: 6px;
  font-size: 3.6px;
  line-height: 6px;
  font-weight: 500;

  & + ${Button} {
    margin-top: 6.5px;
  }
`;

const ThanksHero = styled.div`
  display: flex;
  flex: none;
  justify-content: center;
  height: 98.5px;
  padding-top: 18.5px;
  border-top: 1px solid #a9c7e8;
  border-bottom: 1px solid #a9c7e8;
  background-color: #b4d2f3;
  ${crossed}
`;

const ThanksCard = styled.div`
  display: flex;
  flex-direction: column;
  align-items: center;
  width: 112.5px;
  height: 61px;
  padding-top: 8.6px;
  border: 1px solid #aac8ea;
  background: ${paper};

  strong {
    margin: 2px 0 4.2px;
    font-size: 3.3px;
    line-height: 6px;
  }

  small {
    font-size: 2.75px;
    line-height: 4.8px;
    color: #86a5c9;
  }

  ${Button} {
    margin-top: 4.5px;
    font-weight: 500;
  }
`;

const WireLayer = styled.svg`
  position: absolute;
  inset: 0;
  width: 1500px;
  height: 738px;
  fill: none;
  stroke-width: 2.7;
`;
